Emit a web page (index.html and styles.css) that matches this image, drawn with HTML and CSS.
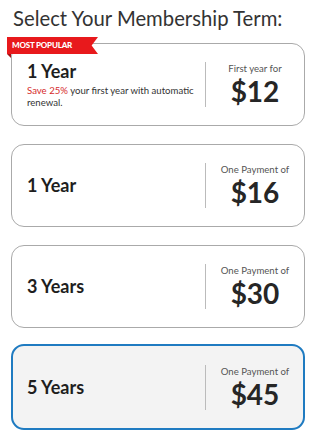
FILE: index.html
```html
<!DOCTYPE html>
<html>
<head>
<meta charset="utf-8">
<link rel="stylesheet" href="styles.css">
</head>
<body>
<div class="page">
  <h1 class="title">Select Your Membership Term:</h1>
  <div class="list">
    <div class="card card-popular">
      <div class="ribbon">MOST POPULAR</div>
      <div class="term">
        <div class="term-name">1 Year</div>
        <div class="term-note"><span class="save">Save 25%</span> your first year with automatic renewal.</div>
      </div>
      <div class="price">
        <div class="price-label">First year for</div>
        <div class="price-value">$12</div>
      </div>
    </div>
    <div class="card">
      <div class="term"><div class="term-name">1 Year</div></div>
      <div class="price">
        <div class="price-label">One Payment of</div>
        <div class="price-value">$16</div>
      </div>
    </div>
    <div class="card">
      <div class="term"><div class="term-name">3 Years</div></div>
      <div class="price">
        <div class="price-label">One Payment of</div>
        <div class="price-value">$30</div>
      </div>
    </div>
    <div class="card card-selected">
      <div class="term"><div class="term-name">5 Years</div></div>
      <div class="price">
        <div class="price-label">One Payment of</div>
        <div class="price-value">$45</div>
      </div>
    </div>
  </div>
</div>
</body>
</html>
```
FILE: styles.css
```css
* { box-sizing: border-box; }
html, body { margin: 0; padding: 0; background: #fff; }
body { font-family: Lato, "Open Sans", sans-serif; color: #222; }
.page { padding: 5px 15px 0 11px; }
.title {
  margin: 0 0 12px 2px;
  font-size: 20.3px;
  font-weight: 400;
  color: #333;
  line-height: 26px;
}
.list { display: flex; flex-direction: column; gap: 18px; }
.card {
  position: relative;
  display: flex;
  align-items: center;
  height: 83px;
  border: 1px solid #aaa;
  border-radius: 13px;
  padding-left: 15px;
  background: #fff;
}
.card-selected {
  border: 2px solid #1f7bc1;
  background: #f3f3f3;
  height: 86px;
  margin-top: -2px;
  padding-left: 14px;
}
.term { flex: 1; padding-right: 10px; }
.term-name { font-size: 18px; font-weight: 700; line-height: 21px; color: #1e1e1e; }
.card-popular .term { padding-top: 1px; }
.term-note { font-size: 9.6px; line-height: 12.5px; color: #333; margin-top: 3px; font-weight: 400; }
.save { color: #d62b2b; }
.price {
  width: 99px;
  height: 45px;
  border-left: 1px solid #bbb;
  display: flex;
  flex-direction: column;
  align-items: center;
  justify-content: center;
  flex-shrink: 0;
}
.card-selected .price { margin-right: -1px; }
.price-label { font-size: 9.6px; line-height: 12px; color: #555; }
.price-value { font-size: 28px; font-weight: 700; line-height: 30px; color: #262626; margin-top: 1px; }
.ribbon {
  position: absolute;
  left: -5px;
  top: -7px;
  height: 17px;
  width: 91px;
  padding-left: 5px;
  background: #e8191c;
  color: #fff;
  font-size: 8px;
  font-weight: 900;
  line-height: 17px;
  letter-spacing: -0.2px;
  clip-path: polygon(0 0, 100% 0, 93% 50%, 100% 100%, 0 100%);
}
.card-popular::before {
  content: "";
  position: absolute;
  left: -5px;
  top: 10px;
  width: 0;
  height: 0;
  border-top: 4px solid #a50f12;
  border-left: 4px solid transparent;
}
```
